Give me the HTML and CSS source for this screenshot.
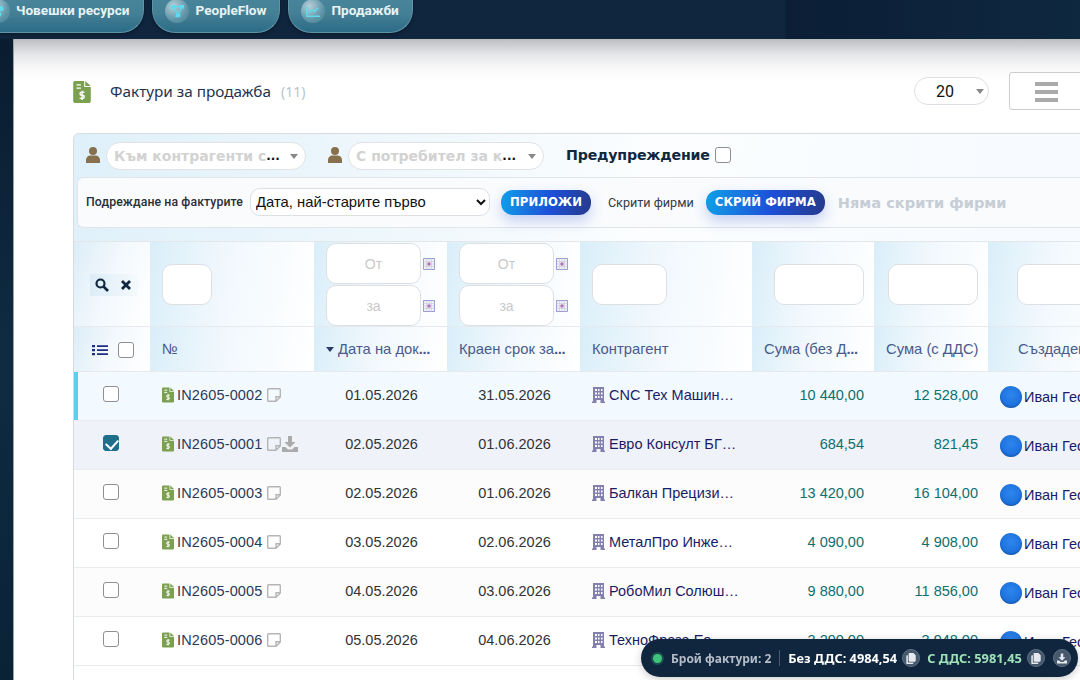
FILE: index.html
```html
<!DOCTYPE html>
<html lang="bg">
<head>
<meta charset="utf-8">
<title>Фактури за продажба</title>
<link rel="stylesheet" href="styles.css">
</head>
<body>
<svg class="defs" width="0" height="0" aria-hidden="true">
  <symbol id="i-invoice" viewBox="0 0 16 20"><path fill="#7ba04f" d="M1.5 0H10v5.500h6V18.500A1.500 1.500 0 0 1 14.500 20h-13A1.500 1.500 0 0 1 0 18.500v-17A1.500 1.500 0 0 1 1.500 0zM11 0l5 4.500h-5z"/><path fill="none" stroke="#fff" stroke-width="1.300" d="M3 3.500h4M3 6.500h4M10.200 10.200H7.600a1.300 1.300 0 0 0 0 2.800h1a1.300 1.300 0 0 1 0 2.800H5.800M8.100 8.800v8.400"/></symbol>
  <symbol id="i-user" viewBox="0 0 14 16"><circle cx="7" cy="4" r="4" fill="#86704e"/><path fill="#86704e" d="M0 16v-3a4.500 4.500 0 0 1 4.500-4.500h5A4.500 4.500 0 0 1 14 13v3z"/></symbol>
  <symbol id="i-note" viewBox="0 0 14 14"><path fill="none" stroke="#b5b5b5" stroke-width="1.400" d="M1.500.7h11a.8.800 0 0 1 .8.800V9L9 13.300H1.500a.8.800 0 0 1-.8-.800v-11a.8.800 0 0 1 .8-.800zM13.300 8.800H9v4.500"/></symbol>
  <symbol id="i-down" viewBox="0 0 16 16"><path fill="currentColor" d="M6 0h4v6h3.500L8 11.500 2.500 6H6zM0 11h3.500L6 13.500h4L12.500 11H16v5H0z"/></symbol>
  <symbol id="i-build" viewBox="0 0 13 16"><path fill="#8380b0" d="M1 0h11v14.500h1V16H8.500v-3h-4v3H0v-1.500h1z"/><path fill="#fff" d="M3 2h2v2H3zM6 2h1.500v2H6zM9 2h1.500v2H9zM3 5.500h2v2H3zM6 5.500h1.500v2H6zM9 5.500h1.500v2H9zM3 9h2v2H3zM6 9h1.500v2H6zM9 9h1.500v2H9z"/></symbol>
  <symbol id="i-cal" viewBox="0 0 12 12"><path fill="#f1f1fa" stroke="#9a9ad2" d="M.5.500h11v11H.5z"/><path stroke="#c9c9d6" stroke-width=".6" d="M.5 3.500h11M.5 6h11M.5 8.500h11M3.500 .5v11M6 .5v11M8.500 .5v11"/><path fill="#b070b5" d="M4.500 4.500h3v3h-3z"/></symbol>
  <symbol id="i-copy" viewBox="0 0 12 14"><path fill="currentColor" d="M4 0h5l3 3v7a1 1 0 0 1-1 1H4a1 1 0 0 1-1-1V1a1 1 0 0 1 1-1zM1 3h1v8.500a.5.500 0 0 0 .5.500H9v1a1 1 0 0 1-1 1H1a1 1 0 0 1-1-1V4a1 1 0 0 1 1-1z"/></symbol>
</svg>

<header class="topbar">
  <a class="pill pill-first"><span class="orb"><svg viewBox="0 0 16 16" class="orb-ico"><circle cx="5" cy="5" r="2.500"/><circle cx="11" cy="5" r="2.500"/><circle cx="8" cy="11" r="3"/></svg></span>Човешки ресурси</a>
  <a class="pill"><span class="orb"><svg viewBox="0 0 16 16" class="orb-ico"><path d="M1 1h5v4H1zM10 1h5v4h-5zM6 10h5v4H6z"/><path d="M6 3h4M4 5l4 5M12 5l-3 5" stroke="#5ddcf0" stroke-width="1.200"/></svg></span>PeopleFlow</a>
  <a class="pill"><span class="orb"><svg viewBox="0 0 16 16" class="orb-ico line"><path d="M1 2v11h14M3 10l3-4 3 2 4-4"/></svg></span>Продажби</a>
</header>

<div class="shell">
  <aside class="side"></aside>
  <main class="main">
    <section class="titlerow">
      <svg class="title-ico"><use href="#i-invoice"/></svg>
      <h1 class="title">Фактури за продажба</h1>
      <span class="count">(11)</span>
      <span class="spacer"></span>
      <div class="size-select">20<i class="caret"></i></div>
      <button class="menu-btn"><i></i><i></i><i></i></button>
    </section>

    <section class="panel">
      <div class="filters">
        <svg class="user"><use href="#i-user"/></svg>
        <div class="combo c1"><span class="ph">Към контрагенти с</span><b>...</b><i class="caret"></i></div>
        <svg class="user u2"><use href="#i-user"/></svg>
        <div class="combo c2"><span class="ph">С потребител за к</span><b>...</b><i class="caret"></i></div>
        <label class="warn">Предупреждение<span class="cb"></span></label>
      </div>
      <div class="sortrow">
        <span class="lbl">Подреждане на фактурите</span>
        <select class="sort"><option>Дата, най-старите първо</option></select>
        <button class="action">ПРИЛОЖИ</button>
        <span class="lbl2">Скрити фирми</span>
        <button class="action hide">СКРИЙ ФИРМА</button>
        <span class="none">Няма скрити фирми</span>
      </div>
    </section>

    <section class="table">
      <div class="row filter-row">
        <div class="th ctl"><div class="tools"><svg viewBox="0 0 14 14" class="tool"><circle cx="5.500" cy="5.500" r="4" fill="none" stroke="#10273f" stroke-width="2.200"/><path d="M8.500 8.500l4.500 4.500" stroke="#10273f" stroke-width="2.600"/></svg><svg viewBox="0 0 14 14" class="tool"><path d="M3 3l8 8M11 3l-8 8" stroke="#10273f" stroke-width="2.800"/></svg></div></div>
        <div class="th"><span class="inp w50"></span></div>
        <div class="th dates">
          <div class="dl"><span class="inp date">От</span><svg class="cal"><use href="#i-cal"/></svg></div>
          <div class="dl"><span class="inp date">за</span><svg class="cal"><use href="#i-cal"/></svg></div>
        </div>
        <div class="th dates">
          <div class="dl"><span class="inp date">От</span><svg class="cal"><use href="#i-cal"/></svg></div>
          <div class="dl"><span class="inp date">за</span><svg class="cal"><use href="#i-cal"/></svg></div>
        </div>
        <div class="th"><span class="inp w75"></span></div>
        <div class="th end"><span class="inp w90"></span></div>
        <div class="th end"><span class="inp w90"></span></div>
        <div class="th end"><span class="inp w90 wide"></span></div>
      </div>
      <div class="row head-row">
        <div class="th ctl"><svg viewBox="0 0 16 12" class="list"><path d="M0 1h3v2.200H0zM0 5h3v2.200H0zM0 9h3v2.200H0zM5 1.200h11v1.800H5zM5 5.200h11v1.800H5zM5 9.200h11v1.800H5z" fill="#1e2d7d"/></svg><span class="cb"></span></div>
        <div class="th">№</div>
        <div class="th"><i class="sortcaret"></i>Дата на док<b class="dots">...</b></div>
        <div class="th">Краен срок за<b class="dots">...</b></div>
        <div class="th">Контрагент</div>
        <div class="th">Сума (без Д<b class="dots">...</b></div>
        <div class="th">Сума (с ДДС)</div>
        <div class="th creator-h">Създаден</div>
      </div>

      <div class="row item active">
        <div class="td chk"><span class="cb"></span></div>
        <div class="td num"><svg class="ii"><use href="#i-invoice"/></svg>IN2605-0002<svg class="nn"><use href="#i-note"/></svg></div>
        <div class="td date-c">01.05.2026</div><div class="td date-c">31.05.2026</div>
        <div class="td firm"><svg class="bb"><use href="#i-build"/></svg><span class="fname">CNC Тех Машин…</span></div>
        <div class="td sum">10 440,00</div><div class="td sum">12 528,00</div>
        <div class="td who"><i class="ava"></i>Иван Георгиев</div>
      </div>
      <div class="row item selected">
        <div class="td chk"><span class="cb on"></span></div>
        <div class="td num"><svg class="ii"><use href="#i-invoice"/></svg>IN2605-0001<svg class="nn"><use href="#i-note"/></svg><svg class="dd"><use href="#i-down"/></svg></div>
        <div class="td date-c">02.05.2026</div><div class="td date-c">01.06.2026</div>
        <div class="td firm"><svg class="bb"><use href="#i-build"/></svg><span class="fname">Евро Консулт БГ…</span></div>
        <div class="td sum">684,54</div><div class="td sum">821,45</div>
        <div class="td who"><i class="ava"></i>Иван Георгиев</div>
      </div>
      <div class="row item">
        <div class="td chk"><span class="cb"></span></div>
        <div class="td num"><svg class="ii"><use href="#i-invoice"/></svg>IN2605-0003<svg class="nn"><use href="#i-note"/></svg></div>
        <div class="td date-c">02.05.2026</div><div class="td date-c">01.06.2026</div>
        <div class="td firm"><svg class="bb"><use href="#i-build"/></svg><span class="fname">Балкан Прецизи…</span></div>
        <div class="td sum">13 420,00</div><div class="td sum">16 104,00</div>
        <div class="td who"><i class="ava"></i>Иван Георгиев</div>
      </div>
      <div class="row item">
        <div class="td chk"><span class="cb"></span></div>
        <div class="td num"><svg class="ii"><use href="#i-invoice"/></svg>IN2605-0004<svg class="nn"><use href="#i-note"/></svg></div>
        <div class="td date-c">03.05.2026</div><div class="td date-c">02.06.2026</div>
        <div class="td firm"><svg class="bb"><use href="#i-build"/></svg><span class="fname">МеталПро Инже…</span></div>
        <div class="td sum">4 090,00</div><div class="td sum">4 908,00</div>
        <div class="td who"><i class="ava"></i>Иван Георгиев</div>
      </div>
      <div class="row item">
        <div class="td chk"><span class="cb"></span></div>
        <div class="td num"><svg class="ii"><use href="#i-invoice"/></svg>IN2605-0005<svg class="nn"><use href="#i-note"/></svg></div>
        <div class="td date-c">04.05.2026</div><div class="td date-c">03.06.2026</div>
        <div class="td firm"><svg class="bb"><use href="#i-build"/></svg><span class="fname">РобоМил Солюш…</span></div>
        <div class="td sum">9 880,00</div><div class="td sum">11 856,00</div>
        <div class="td who"><i class="ava"></i>Иван Георгиев</div>
      </div>
      <div class="row item">
        <div class="td chk"><span class="cb"></span></div>
        <div class="td num"><svg class="ii"><use href="#i-invoice"/></svg>IN2605-0006<svg class="nn"><use href="#i-note"/></svg></div>
        <div class="td date-c">05.05.2026</div><div class="td date-c">04.06.2026</div>
        <div class="td firm"><svg class="bb"><use href="#i-build"/></svg><span class="fname">ТехноФреза Ео…</span></div>
        <div class="td sum">3 290,00</div><div class="td sum">3 948,00</div>
        <div class="td who"><i class="ava"></i>Иван Георгиев</div>
      </div>
    </section>
  </main>
</div>

<div class="totals">
  <i class="dot"></i><span class="t-count">Брой фактури: 2</span><i class="sep"></i>
  <span class="t-net">Без ДДС: 4984,54</span><span class="round"><svg class="cp"><use href="#i-copy"/></svg></span>
  <span class="t-gross">С ДДС: 5981,45</span><span class="round"><svg class="cp"><use href="#i-copy"/></svg></span>
  <span class="round"><svg class="cp"><use href="#i-down"/></svg></span>
</div>
</body>
</html>
```

FILE: styles.css
```css
* { box-sizing: border-box; }
html, body { margin: 0; height: 680px; overflow: hidden; background: #fff; }
body { font-family: "Liberation Sans", Roboto, sans-serif; font-size: 14.5px; color: #333; }
.defs { position: absolute; }

.topbar {
  height: 39px; display: flex; gap: 8px; align-items: flex-end; padding-bottom: 6px; overflow: hidden;
  background: linear-gradient(90deg, #10263f 0, #10263f 785px, #0b1e35 786px, #0e2840 1080px);
}
.pill {
  height: 46px; flex: none; display: flex; align-items: flex-end; gap: 6px; padding: 0 13px 14px 12px;
  border-radius: 0 0 23px 23px; border: 1px solid #5f93a6; border-top: 0;
  background: linear-gradient(#4d8a9e 0, #437f95 60%, #2c6c86 100%);
  color: #e9f3f6; font: 700 13.600px Roboto, sans-serif; white-space: nowrap;
  box-shadow: 0 1px 4px rgba(0,0,0,.4);
}
.pill-first { margin-left: -31px; padding: 0 14px 14px 16px; }
.orb {
  width: 24px; height: 24px; border-radius: 50%; display: flex; align-items: center; justify-content: center; margin-bottom: -5px;
  background: radial-gradient(circle at 35% 30%, #b6cfd8, #5f95a8 60%, #47808f);
}
.orb-ico { width: 15px; height: 15px; fill: #5ddcf0; }
.orb-ico.line { fill: none; stroke: #5ddcf0; stroke-width: 1.500; }

.shell { display: flex; height: 641px; }
.side { width: 14px; flex: none; background: linear-gradient(#0a1c30, #0f2b42 50%, #0a2236); border-right: 1px solid #9aa2a8; }
.main {
  flex: 1; min-width: 0; padding: 33px 0 0 59px; overflow: hidden;
  background: linear-gradient(#bcbec2 0, #e6e7e9 16px, #f7f7f8 28px, #fff 42px);
}

.titlerow { height: 38px; width: 1017px; display: flex; align-items: center; margin-bottom: 23px; }
.title-ico { width: 18px; height: 22px; flex: none; margin: 2px 19px 0 0; }
.title { font: 400 15.300px "Noto Sans", sans-serif; color: #1e3350; margin: 0 10px 0 0; }
.count { font: 400 14px "Noto Sans", sans-serif; color: #b9c3cf; }
.spacer { flex: 1; }
.caret { display: inline-block; border: 4.500px solid transparent; border-top: 5px solid #888; border-bottom: 0; }
.size-select {
  width: 75px; height: 28px; border: 1px solid #dcdfe3; border-radius: 14px; background: #fff; margin-right: 20px;
  display: flex; align-items: center; justify-content: flex-end; gap: 22px; padding-right: 4px; font: 400 16px Roboto, sans-serif; color: #111;
}
.menu-btn { width: 81px; height: 38px; flex: none; background: #fff; border: 1px solid #ccc; border-radius: 3px; padding: 9px 0 0 25px; display: flex; flex-direction: column; gap: 4px; }
.menu-btn i { display: block; width: 23px; height: 4px; background: #aaa; }

.panel {
  width: 1040px; height: 108px; border: 1px solid #d8dcdf; border-bottom: 0; border-radius: 6px 0 0 0; padding: 7px 0 0 3px;
  background: linear-gradient(100deg, #dff0fa 0, #eef7fc 30%, #fbfdfe 55%, #f6faff 100%);
}
.filters { height: 30px; display: flex; align-items: center; margin-bottom: 6px; }
.user { width: 14px; height: 16px; flex: none; margin: 0 6px 3px 9px; }
.user.u2 { margin-left: 22px; }
.combo {
  height: 28px; display: flex; align-items: center; background: #fff; border: 1px solid #e0e2e5; border-radius: 14px; padding: 0 7px;
  font: 700 14px "DejaVu Sans", sans-serif; color: #d2d2d2; white-space: nowrap; overflow: hidden;
}
.combo b { color: #111; font-size: 12px; }
.combo .caret { margin-left: auto; }
.c1 { width: 200px; }
.c2 { width: 196px; }
.warn { margin-left: 22px; padding-bottom: 3px; display: flex; align-items: center; gap: 5px; font: 700 14.200px "DejaVu Sans", sans-serif; color: #10273f; letter-spacing: -.2px; }
.cb { display: inline-block; width: 16px; height: 16px; border: 1px solid #8f8f8f; border-radius: 3px; background: #fff; flex: none; position: relative; }
.cb.on { background: #1f6f8b; border-color: #1f6f8b; }
.cb.on::after { content: ""; position: absolute; left: 4px; top: 1px; width: 6px; height: 10px; border: solid #fff; border-width: 0 2.500px 2.500px 0; transform: rotate(42deg); }
.sortrow {
  height: 51px; display: flex; align-items: center; background: #f9fbfd; border: 1px solid #e0e5ea; border-right: 0; border-radius: 6px 0 0 6px; padding: 0 0 1px 8px;
}
.lbl { font: 500 12.300px Roboto, sans-serif; color: #2a2f36; letter-spacing: .1px; white-space: nowrap; margin-right: 7px; }
.sort { width: 240px; height: 28px; border: 1px solid #dcdfe3; border-radius: 10px; background: #fff; font: 400 14.800px "Liberation Sans", sans-serif; color: #111; padding-left: 1px; margin-right: 11px; }
.action {
  height: 25px; border: 0; border-radius: 12px; padding: 0 9px; color: #fff; font: 700 11.700px "DejaVu Sans", sans-serif; white-space: nowrap;
  background: linear-gradient(100deg, #10a0e8 0, #1d4fd8 55%, #263a8a 100%); box-shadow: 0 6px 14px rgba(40,80,210,.25);
}
.lbl2 { font: 400 12.600px Roboto, sans-serif; color: #333c46; margin: 0 12px 0 17px; white-space: nowrap; }
.none { margin-left: 13px; font: 700 14.600px "DejaVu Sans", sans-serif; color: #c6cdd5; white-space: nowrap; }

.table { width: 1040px; height: 460px; border-left: 1px solid #d8dcdf; }
.row { display: grid; grid-template-columns: 76px 164px 133px 133px 172px 122px 114px 126px; }
.th {
  display: flex; align-items: center; padding-left: 12px; min-width: 0; white-space: nowrap; overflow: hidden;
  background: linear-gradient(100deg, #d9eef9 0, #f1f8fd 45%, #fff 100%); color: #4a5a8c; font-size: 14.800px;
}
.filter-row { height: 86px; border-top: 1px solid #e3e7ea; border-bottom: 1px solid #e6eaee; }
.head-row { height: 45px; border-bottom: 1px solid #e6eaee; }
.ctl { justify-content: center; padding: 0; gap: 10px; background: linear-gradient(110deg, #dcedf8 0, #f4f9fd 50%, #fff 100%); }
.head-row .ctl { padding: 2px 0 0 1px; }
.tools { display: flex; padding: 4px 0; background: linear-gradient(90deg, #dcecf7, #f5fafd); margin: 1px 0 0 4px; }
.tool { width: 14px; height: 14px; margin: 0 5px; }
.list { width: 16px; height: 12px; }
.inp {
  display: flex; align-items: center; justify-content: center; height: 41px; background: #fff; border: 1px solid #dde0e3; border-radius: 10px;
  color: #c9c9c9; font-size: 14px; flex: none;
}
.w50 { width: 50px; }
.w75 { width: 75px; }
.w90 { width: 90px; }
.wide { width: 120px; }
.end { justify-content: flex-start; padding-left: 22px; }
.end:nth-child(7) { padding-left: 14px; }
.end:nth-child(8) { padding-left: 29px; }
.dates { flex-direction: column; align-items: flex-start; gap: 1px; padding-top: 1px; justify-content: flex-start; }
.dl { display: flex; align-items: center; gap: 2px; }
.date { width: 95px; }
.cal { width: 12px; height: 12px; flex: none; }
.sortcaret { border: 4.500px solid transparent; border-top: 5px solid #2c3a66; border-bottom: 0; margin: 1px 4px 0 0; }
.dots { color: #4a5a8c; letter-spacing: -.4px; }
.creator-h { padding-left: 30px; }

.item { height: 49px; background: #fff; border-bottom: 1px solid #e9ecef; }
.item:nth-child(odd) { background: #fcfcfc; }
.item.active { background: #f2faff; box-shadow: inset 4px 0 0 #5fcdf0; }
.item.selected { background: #eff2f9; }
.td { display: flex; align-items: center; min-width: 0; white-space: nowrap; overflow: hidden; padding-bottom: 2px; }
.chk { justify-content: center; padding: 0 2px 5px 0; }
.num { padding-left: 12px; color: #2a3a5a; letter-spacing: .15px; }
.ii { width: 12px; height: 16px; flex: none; margin-right: 3px; }
.nn { width: 14px; height: 14px; flex: none; margin-left: 4px; }
.dd { width: 16px; height: 16px; flex: none; margin-left: 1px; color: #aaa; }
.date-c { justify-content: center; padding-left: 2px; color: #333; }
.firm { padding-left: 12px; color: #1b1b66; }
.bb { width: 13px; height: 16px; flex: none; margin-right: 4px; }
.fname { overflow: hidden; }
.sum { justify-content: flex-end; padding-right: 10px; color: #0c6f70; }
.who { padding: 2px 0 0 12px; color: #1b1b66; }
.ava { width: 22px; height: 22px; border-radius: 50%; flex: none; margin-right: 2px; background: radial-gradient(circle at 50% 40%, #2d86ee, #1566d4); box-shadow: inset 0 -1px 2px rgba(0,0,0,.25); }

.totals {
  position: fixed; left: 641px; top: 639px; width: 437px; height: 38px; display: flex; align-items: center; padding-left: 12px;
  border-radius: 19px; background: #10263f; box-shadow: 0 2px 8px rgba(0,0,0,.2);
  font: 700 12.800px "Noto Sans", sans-serif; color: #fff; white-space: nowrap;
}
.dot { width: 9px; height: 9px; border-radius: 50%; background: #3fc27a; box-shadow: 0 0 0 2px rgba(63,194,122,.25); margin-right: 9px; flex: none; }
.t-count { color: #b4bdc7; font-size: 12px; }
.sep { width: 1px; height: 16px; background: #47586b; margin: 0 8px; }
.round { width: 18px; height: 18px; border-radius: 50%; background: #46586b; border: 1px solid #5e6e80; display: flex; align-items: center; justify-content: center; margin-left: 5px; flex: none; color: #e6e9ee; }
.cp { width: 10px; height: 11px; }
.t-gross { color: #9fe0b8; margin-left: 7px; }
.round:last-child { margin-left: 8px; }
```
